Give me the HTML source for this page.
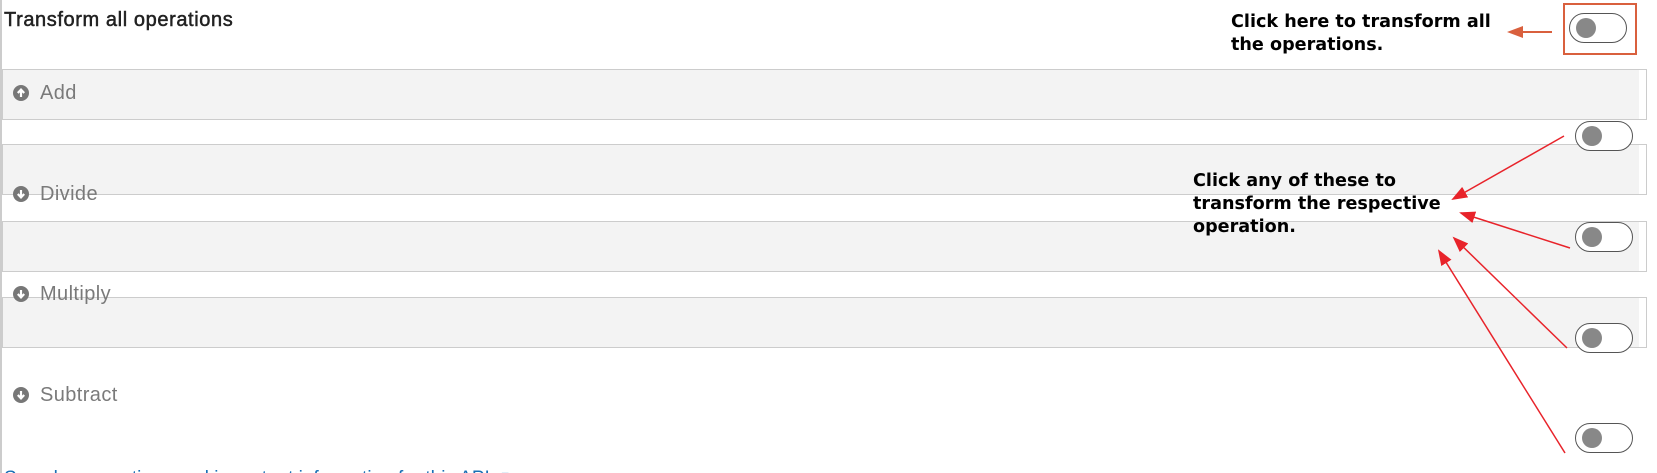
<!DOCTYPE html>
<html style="overflow:hidden;height:473px"><head><style>
html,body{overflow:hidden;height:473px}
body{margin:0;width:1657px;background:#fff;position:relative;font-family:"Liberation Sans",Arial,sans-serif}
.lb{position:absolute;left:0;top:0;width:2px;height:473px;background:#ccc}
.title{position:absolute;left:4px;top:9px;font-size:20px;letter-spacing:0.6px;color:#222;font-weight:normal;-webkit-text-stroke:0.5px #222}
.box{position:absolute;left:2px;width:1645px;height:51px;border:1px solid #ccc;background:linear-gradient(to right,#f3f3f3 1636px,#fff 1636px);box-sizing:border-box}
.lab{position:absolute;left:13px;font-size:20px;letter-spacing:0.4px;color:#7a7a7a;display:flex;align-items:center;height:24px}
.ic{width:16px;height:16px;margin-right:11px;display:inline-block}
.tg{position:absolute;width:58px;height:30px;border:1px solid #555;border-radius:16px;box-sizing:border-box;background:#fff}
.tg::after{content:"";position:absolute;left:6px;top:4px;width:20px;height:20px;border-radius:50%;background:#888}
.ann{position:absolute;font-family:"DejaVu Sans",sans-serif;font-weight:bold;font-size:17.6px;color:#000;line-height:23px}
.clip{position:absolute;left:0;top:0;width:1657px;height:473px;overflow:hidden}
.link{position:absolute;left:4px;top:467px;font-size:19px;color:#1a6fb5;white-space:nowrap}
</style></head><body>
<div class="clip">
<div class="lb"></div>
<div class="title">Transform all operations</div>
<div class="box" style="top:69px"></div>
<div class="box" style="top:144px"></div>
<div class="box" style="top:221px"></div>
<div class="box" style="top:297px"></div>

<div class="lab" style="top:81px"><svg class="ic" viewBox="0 0 16 16"><circle cx="8" cy="8" r="8" fill="#777"/><path d="M8 12V5M4.8 8 8 4.6 11.2 8" stroke="#fff" stroke-width="2.2" fill="none"/></svg>Add</div>
<div class="lab" style="top:182px"><svg class="ic" viewBox="0 0 16 16"><circle cx="8" cy="8" r="8" fill="#777"/><path d="M8 4v7M4.8 8 8 11.4 11.2 8" stroke="#fff" stroke-width="2.2" fill="none"/></svg>Divide</div>
<div class="lab" style="top:282px"><svg class="ic" viewBox="0 0 16 16"><circle cx="8" cy="8" r="8" fill="#777"/><path d="M8 4v7M4.8 8 8 11.4 11.2 8" stroke="#fff" stroke-width="2.2" fill="none"/></svg>Multiply</div>
<div class="lab" style="top:383px"><svg class="ic" viewBox="0 0 16 16"><circle cx="8" cy="8" r="8" fill="#777"/><path d="M8 4v7M4.8 8 8 11.4 11.2 8" stroke="#fff" stroke-width="2.2" fill="none"/></svg>Subtract</div>

<div style="position:absolute;left:1563px;top:3px;width:74px;height:52px;border:2px solid #d9603e;box-sizing:border-box"></div>
<div class="tg" style="left:1569px;top:13px"></div>
<div class="tg" style="left:1575px;top:121px"></div>
<div class="tg" style="left:1575px;top:222px"></div>
<div class="tg" style="left:1575px;top:323px"></div>
<div class="tg" style="left:1575px;top:423px"></div>

<div class="ann" style="left:1231px;top:11px">Click here to transform all<br>the operations.</div>
<div class="ann" style="left:1193px;top:170px">Click any of these to<br>transform the respective<br>operation.</div>

<svg style="position:absolute;left:0;top:0" width="1657" height="473">
<defs>
<marker id="r" markerWidth="16" markerHeight="12" refX="14" refY="6" orient="auto" markerUnits="userSpaceOnUse"><path d="M0,0 L16,6 L0,12z" fill="#e8232a"/></marker>
</defs>
<line x1="1552" y1="32" x2="1514" y2="32" stroke="#d9603e" stroke-width="2"/>
<path d="M1507 32 L1523 26 L1523 38z" fill="#d9603e"/>
<line x1="1564" y1="136" x2="1453" y2="199" stroke="#e8232a" stroke-width="1.5" marker-end="url(#r)"/>
<line x1="1570" y1="248" x2="1461" y2="213" stroke="#e8232a" stroke-width="1.5" marker-end="url(#r)"/>
<line x1="1567" y1="348" x2="1454" y2="238" stroke="#e8232a" stroke-width="1.5" marker-end="url(#r)"/>
<line x1="1565" y1="453" x2="1439" y2="251" stroke="#e8232a" stroke-width="1.5" marker-end="url(#r)"/>
</svg>
<div class="link">See also operations and important information for this API ⬈</div>
</div>
</body></html>
